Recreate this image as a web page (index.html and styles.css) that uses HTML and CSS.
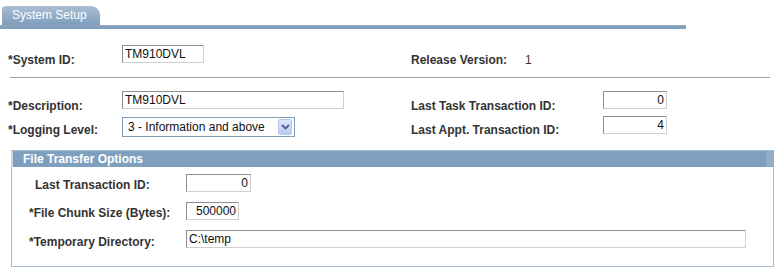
FILE: index.html
```html
<!DOCTYPE html>
<html>
<head>
<meta charset="utf-8">
<title>System Setup</title>
<link rel="stylesheet" href="styles.css">
</head>
<body>
<div class="page">
  <div class="tabs">
    <div class="tab">System Setup</div>
    <div class="tabline"></div>
  </div>

  <div class="row-id">
    <div class="lbl lbl-id">*System ID:</div>
    <input class="inp w-id" type="text" value="TM910DVL" readonly>
    <div class="lbl lbl-release">Release Version:</div>
    <div class="value">1</div>
  </div>
  <div class="sep"></div>

  <div class="main">
    <div class="lbl pad8">*Description:</div>
    <div><input class="inp w-desc" type="text" value="TM910DVL" readonly></div>
    <div class="lbl pad8">Last Task Transaction ID:</div>
    <div><input class="inp w-num num" type="text" value="0" readonly></div>

    <div class="lbl pad7">*Logging Level:</div>
    <div class="sel-wrap">
      <div class="select">
        <span class="sel-text">3 - Information and above</span>
        <span class="sel-btn">
          <svg width="9" height="6" viewBox="0 0 9 6"><path d="M1 1 L4.5 4.5 L8 1" fill="none" stroke="#4a5f8a" stroke-width="1.8"/></svg>
        </span>
      </div>
    </div>
    <div class="lbl pad7">Last Appt. Transaction ID:</div>
    <div><input class="inp w-num num" type="text" value="4" readonly></div>
  </div>

  <div class="group">
    <div class="group-head">File Transfer Options</div>
    <div class="group-body">
      <div class="lbl g-pad4 ind-plain">Last Transaction ID:</div>
      <div><input class="inp w-last num" type="text" value="0" readonly></div>

      <div class="lbl g-pad4 ind-req">*File Chunk Size (Bytes):</div>
      <div><input class="inp w-chunk num" type="text" value="500000" readonly></div>

      <div class="lbl g-pad5 ind-req">*Temporary Directory:</div>
      <div><input class="inp w-temp" type="text" value="C:\temp" readonly></div>
    </div>
  </div>
</div>
</body>
</html>
```

FILE: styles.css
```css
html, body {
  margin: 0;
  padding: 0;
  background: #ffffff;
}

body {
  font-family: "Liberation Sans", Arial, sans-serif;
  font-size: 12px;
  color: #333333;
}

.page {
  width: 781px;
}

/* Tabs */
.tabs {
  display: flex;
  flex-direction: column;
  padding-top: 6px;
}

.tab {
  margin-left: 2px;
  width: 98px;
  height: 19px;
  box-sizing: border-box;
  padding-left: 10px;
  line-height: 19px;
  color: #ffffff;
  background: linear-gradient(#a9bed3, #7e9dbc);
  border-radius: 4px 9px 0 0;
}

.tabline {
  width: 686px;
  height: 4px;
  box-sizing: border-box;
  border-top: 1px solid #98a8b8;
  background: #7f9fbf;
}

/* Labels */
.lbl {
  font-weight: bold;
  line-height: 14px;
  color: #333333;
  white-space: nowrap;
}

.inp {
  box-sizing: border-box;
  height: 18px;
  margin: 0;
  padding: 0 2px;
  border: 1px solid;
  border-color: #8e8e8e #cfcfcf #cfcfcf #8e8e8e;
  font-family: "Liberation Sans", Arial, sans-serif;
  font-size: 12px;
  color: #111111;
  background: #ffffff;
  outline: none;
  display: block;
}

.num {
  text-align: right;
}

/* Row 1 */
.row-id {
  display: flex;
  align-items: flex-start;
  height: 32px;
  margin-top: 16px;
  padding-left: 8px;
}

.lbl-id {
  width: 114px;
  padding-top: 8px;
}

.w-id {
  width: 82px;
}

.lbl-release {
  margin-left: 207px;
  width: 114px;
  padding-top: 8px;
}

.value {
  padding-top: 8px;
  line-height: 14px;
}

.sep {
  margin-left: 10px;
  width: 760px;
  height: 1px;
  background: #a0a0a0;
}

/* Rows 2/3 */
.main {
  display: grid;
  grid-template-columns: 114px 289px 192px 64px;
  grid-template-rows: 25px 21px;
  margin-top: 13px;
  padding-left: 8px;
}

.pad8 {
  padding-top: 8px;
}

.pad7 {
  padding-top: 7px;
}

.w-desc {
  width: 222px;
}

.w-num {
  width: 64px;
}

.sel-wrap {
  padding-top: 1px;
}

.select {
  box-sizing: border-box;
  width: 173px;
  height: 20px;
  border: 1px solid #7f9db9;
  display: flex;
  align-items: center;
  justify-content: space-between;
  padding: 0 2px 0 5px;
  background: #ffffff;
  color: #111111;
}

.sel-text {
  line-height: 16px;
}

.sel-btn {
  box-sizing: border-box;
  width: 14px;
  height: 16px;
  border: 1px solid #b7c8ef;
  border-radius: 2px;
  background: linear-gradient(#dce6fd, #b9cbf6);
  display: flex;
  align-items: center;
  justify-content: center;
}

/* Group box */
.group {
  margin-top: 13px;
  margin-left: 11px;
  width: 763px;
  box-sizing: border-box;
  border: 1px solid #a3bad2;
  border-top: none;
}

.group-head {
  height: 17px;
  box-sizing: border-box;
  border-top: 1px solid #a7bdd3;
  margin: 0 -1px;
  padding-left: 12px;
  line-height: 16px;
  background: linear-gradient(90deg, #c9d6e3 0, #c9d6e3 2px, #7f9fbf 2px, #7f9fbf calc(100% - 8px), #94aec8 calc(100% - 8px));
  color: #ffffff;
  font-weight: bold;
}

.group-body {
  display: grid;
  grid-template-columns: 174px 1fr;
  grid-template-rows: 28px 28px 18px;
  padding-top: 7px;
  padding-bottom: 18px;
}

.g-pad4 {
  padding-top: 4px;
}

.g-pad5 {
  padding-top: 5px;
}

.ind-plain {
  padding-left: 23px;
}

.ind-req {
  padding-left: 17px;
}

.w-last {
  width: 65px;
}

.w-chunk {
  width: 53px;
}

.w-temp {
  width: 560px;
}
```
